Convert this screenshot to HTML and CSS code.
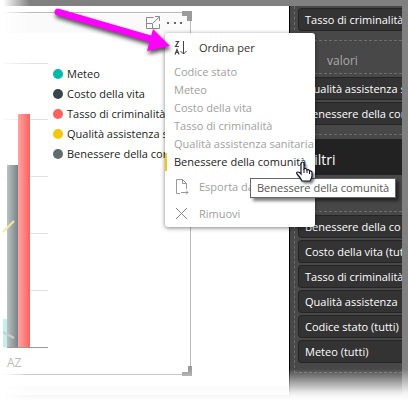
FILE: index.html
```html
<!DOCTYPE html>
<html lang="it">
<head>
<meta charset="utf-8">
<title>Report</title>
<link rel="stylesheet" href="styles.css">
</head>
<body>
<div class="app">
  <main class="report">
    <section class="visual">
      <header class="visual-bar">
        <button class="tool" aria-label="Espandi">
          <svg width="15" height="14" viewBox="0 0 15 14" fill="none" stroke="#8a8a8a"><path d="M7.500 1.500H.5V12.500H13.500V8M.5 7.500H6.500V12.500M7 7L13.500 .8M9 .5H13.500V5"/></svg>
        </button>
        <button class="tool" aria-label="Altre opzioni">
          <svg width="16" height="14" viewBox="0 0 16 14" fill="#666"><rect y="6" width="2" height="2"/><rect x="7" y="6" width="2" height="2"/><rect x="13" y="6" width="2" height="2"/></svg>
        </button>
      </header>
      <div class="visual-body">
        <svg class="plot" width="45" height="338" viewBox="0 0 45 338">
          <defs>
            <linearGradient id="gray"><stop offset="0" stop-color="#bcc2c4"/><stop offset="1" stop-color="#788284"/></linearGradient>
            <linearGradient id="red"><stop offset="0" stop-color="#ffa5a3"/><stop offset="1" stop-color="#fd625e"/></linearGradient>
            <linearGradient id="grid" gradientUnits="userSpaceOnUse" x1="0" y1="0" x2="30" y2="0"><stop offset="0" stop-color="#fafafa"/><stop offset="1" stop-color="#e0e0e0"/></linearGradient>
          </defs>
          <path d="M0 30.500H45M0 86.500H45M0 143.500H45M0 200.500H45M0 257.500H45" stroke="url(#grid)"/>
          <path d="M4 314.500H45" stroke="#999"/>
          <rect y="286" width="4" height="28" fill="#c5efeb"/>
          <rect x="4" y="132" width="11" height="182" fill="url(#gray)"/>
          <rect x="15" y="81" width="12" height="233" fill="url(#red)"/>
          <path d="M0 199L11 188" stroke="#f6e8a6" stroke-width="2"/>
          <path d="M0 299L11 305" stroke="#c8cdce" stroke-width="2"/>
          <text x="4" y="334" class="axis">AZ</text>
        </svg>
        <ul class="legend">
          <li><i class="dot teal"></i>Meteo</li>
          <li><i class="dot slate"></i>Costo della vita</li>
          <li><i class="dot coral"></i>Tasso di criminalità</li>
          <li><i class="dot gold"></i>Qualità assistenza sa</li>
          <li><i class="dot gray"></i>Benessere della com</li>
        </ul>
      </div>
      <span class="corner top"></span>
      <span class="corner bottom"></span>
    </section>
    <div class="strip"></div>
  </main>
  <aside class="panel">
    <div class="well first"><div class="chip">Tasso di criminalità</div></div>
    <h3 class="label">valori</h3>
    <div class="well values">
      <div class="chip">Qualità assistenza s</div>
      <div class="chip">Benessere della com</div>
    </div>
    <h2 class="title">Filtri</h2>
    <h3 class="level">Filtri livello</h3>
    <div class="well filters">
      <div class="chip">Benessere della co</div>
      <div class="chip">Costo della vita (tutti)</div>
      <div class="chip">Tasso di criminalità</div>
      <div class="chip">Qualità assistenza</div>
      <div class="chip">Codice stato (tutti)</div>
      <div class="chip">Meteo (tutti)</div>
    </div>
  </aside>
  <div class="fade left"></div>
  <div class="fade bottom"></div>
</div>

<div class="menu" role="menu">
  <button class="command sort" role="menuitem">
    <svg width="15" height="16" viewBox="0 0 15 16" fill="none" stroke="#444"><path d="M1.500 1.500H4.500L1.500 6.500H5M1 14.500L3 9.500L5 14.500M2 12.500H4" stroke-width="1.200"/><path d="M9.500 1V14M6.500 11L9.500 14L12.500 11"/></svg>
    Ordina per
  </button>
  <button class="field" role="menuitem">Codice stato</button>
  <button class="field" role="menuitem">Meteo</button>
  <button class="field" role="menuitem">Costo della vita</button>
  <button class="field" role="menuitem">Tasso di criminalità</button>
  <button class="field" role="menuitem">Qualità assistenza sanitaria</button>
  <button class="field current" role="menuitem">Benessere della comunità</button>
  <button class="command export" role="menuitem">
    <svg width="15" height="16" viewBox="0 0 15 16" fill="none" stroke="#999"><path d="M6 14.500H2.500V.5H8.500L12.500 4.500V10M8.500 .5V4.500H12.500M7 13.500H14M12 11.500L14 13.500L12 15.500"/></svg>
    Esporta dati
  </button>
  <button class="command" role="menuitem">
    <svg width="15" height="16" viewBox="0 0 15 16" fill="none" stroke="#888"><path d="M2 2L13 13M13 2L2 13"/></svg>
    Rimuovi
  </button>
</div>
<div class="tooltip" role="tooltip">Benessere della comunità</div>
<svg class="hand" width="20" height="24" viewBox="0 0 20 24"><path d="M6 12V3Q6 1 7.500 1T9 3V8Q11 6.500 12 9Q14 8 14.500 10Q17 9.500 17 12V15Q17 17 15 20H7Q5 16 2 13Q1 11 3 11Q4.500 11 6 13Z" fill="#fff" stroke="#111133" stroke-width="1.200"/><path d="M9 8V12M12 9V12M14.500 10V13" stroke="#111133"/></svg>
<svg class="arrow" width="130" height="54" viewBox="0 0 130 54"><path d="M8 7L101 34" stroke="#ff00ff" stroke-width="7" stroke-linecap="round"/><path d="M103 24L120 41L97 46Z" fill="#ff00ff"/></svg>
</body>
</html>
```
FILE: styles.css
```css
* { box-sizing: border-box; }
body {
  margin: 0;
  background: #fff;
  color: #222;
  font: 11px/18px "Open Sans", "Noto Sans", sans-serif;
  overflow: hidden;
}
button { border: 0; padding: 0; background: none; font: inherit; color: inherit; text-align: left; }
ul, h2, h3 { margin: 0; padding: 0; font-weight: 400; list-style: none; }
.app {
  position: relative;
  display: flex;
  height: 100vh;
  padding: 6px 6px 6px 3px;
  background: #808080;
}
.report {
  flex: 1;
  min-width: 0;
  display: flex;
  flex-direction: column;
  padding-top: 6px;
  background: #fff;
}
.visual {
  position: relative;
  flex: 1;
  min-height: 0;
  margin: 0 98px 11px 0;
  border: solid #bbb;
  border-width: 1px 1px 1px 0;
}
.visual-bar {
  display: flex;
  justify-content: flex-end;
  gap: 6px;
  height: 20px;
  padding: 3px 7px 0 0;
  background: #fafafa;
}
.tool { height: 14px; line-height: 0; }
.visual-body { display: flex; gap: 5px; }
.plot { position: relative; z-index: 1; flex: none; }
.axis { font-size: 12px; fill: #bbb; }
.legend { flex: 1; min-width: 0; padding-top: 31px; white-space: nowrap; }
.legend li { display: flex; align-items: center; gap: 4px; height: 20px; }
.dot { flex: none; width: 10px; height: 10px; border-radius: 50%; }
.teal { background: #01b8aa; }
.slate { background: #374649; }
.coral { background: #fd625e; }
.gold { background: #f2c80f; }
.gray { background: #5f6b6d; }
.corner { position: absolute; right: -2px; width: 10px; height: 10px; border: solid #9b9b9b; }
.corner.top { top: -2px; border-width: 5px 5px 0 0; }
.corner.bottom { bottom: -2px; border-width: 0 4px 4px 0; }
.strip { height: 9px; background: #f3f3f3; }
.panel {
  width: 113px;
  overflow: hidden;
  border-left: 1px solid #000;
  background: #484848;
  color: #fff;
  white-space: nowrap;
}
.well { display: grid; gap: 2px; margin-left: 4px; padding: 3px 0 9px 3px; border: dashed #6c6c6c; border-width: 1px 0 1px 1px; }
.well.first { padding-top: 2px; border-top: 0; }
.chip { height: 23px; padding: 2px 0 0 6px; overflow: hidden; border: 1px solid #252525; border-right: 0; border-radius: 4px 0 0 4px; background: #333; }
.label { margin-left: 4px; padding: 11px 0 3px 33px; font-size: 12px; color: #aaa; }
.title { height: 36px; margin-top: 4px; padding: 0 17px; background: #222; font: 14px/42px "Open Sans", sans-serif; }
.level { height: 36px; padding: 8px 17px; color: #ccc; }
.fade { position: absolute; pointer-events: none; }
.fade.left { inset: 0 auto 0 0; width: 30px; background: linear-gradient(to right, #fff 3px, transparent); }
.fade.bottom { inset: auto 0 0 0; height: 32px; background: linear-gradient(transparent, #ffffffe6 24px, #fff); }
.menu {
  position: absolute;
  z-index: 2;
  top: 33px;
  left: 165px;
  width: 150px;
  display: flex;
  flex-direction: column;
  border-radius: 3px;
  background: #fff;
  box-shadow: 0 1px 4px #00000080;
  color: #a0a0a0;
}
.command { display: flex; align-items: center; gap: 10px; height: 27px; padding-left: 9px; }
.command.sort { height: 30px; color: #333; }
.command.export { margin-top: 2px; }
.field { height: 18px; padding-left: 9px; white-space: nowrap; overflow: hidden; }
.current { padding-left: 7px; border-left: 2px solid #f2c80f; color: #222; }
.tooltip {
  position: absolute;
  z-index: 3;
  top: 178px;
  left: 250px;
  padding: 0 6px;
  border: 1px solid #666;
  background: #fff;
  box-shadow: 3px 3px 3px #00000080;
  color: #555;
}
.hand, .arrow { position: absolute; z-index: 4; }
.hand { top: 161px; left: 295px; filter: drop-shadow(2px 2px 1px #00000080); }
.arrow { top: 5px; left: 50px; filter: drop-shadow(1px 3px 2px #000000b3); }
```
